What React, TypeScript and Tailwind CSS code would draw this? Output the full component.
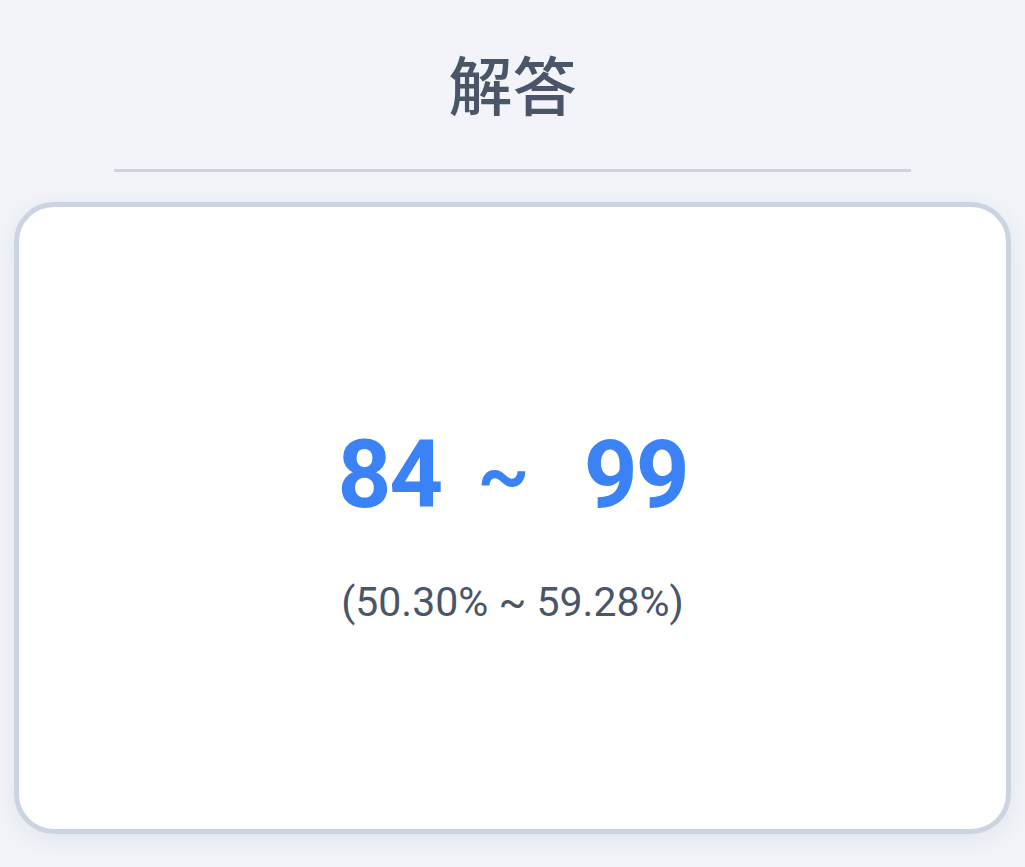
import React from 'react';

export default function App() {
  return (
    <div className="min-h-[867px] w-full bg-[#f2f4f9] overflow-hidden" style={{ fontFamily: 'Roboto, "Noto Sans CJK SC", sans-serif' }}>
      {/* Header */}
      <div className="pt-[39px] flex flex-col items-center">
        <h1 className="text-[64px] leading-[86px] font-medium text-[#4a5568]" style={{ fontFamily: '"Noto Sans CJK SC", sans-serif' }}>
          解答
        </h1>
      </div>
      <div className="mx-[114px] mt-[44px] h-[3px] bg-[#cbd5e1]" />

      {/* Answer card */}
      <div className="mx-[14px] mt-[30px] h-[632px] rounded-[40px] border-[5px] border-[#cbd5e1] bg-white shadow-[0_6px_24px_rgba(148,163,184,0.18)] flex flex-col items-center justify-center">
        <div className="mt-[15px] flex items-center text-[94px] leading-none font-bold tracking-[-2px] text-[#3b82f6]">
          <span>84</span>
          <span className="ml-[36px] mr-[56px] text-[80px] font-semibold">~</span>
          <span>99</span>
        </div>
        <div className="mt-[60px] text-[41px] leading-none text-[#4a5568]">
          (50.30% ~ 59.28%)
        </div>
      </div>
    </div>
  );
}
